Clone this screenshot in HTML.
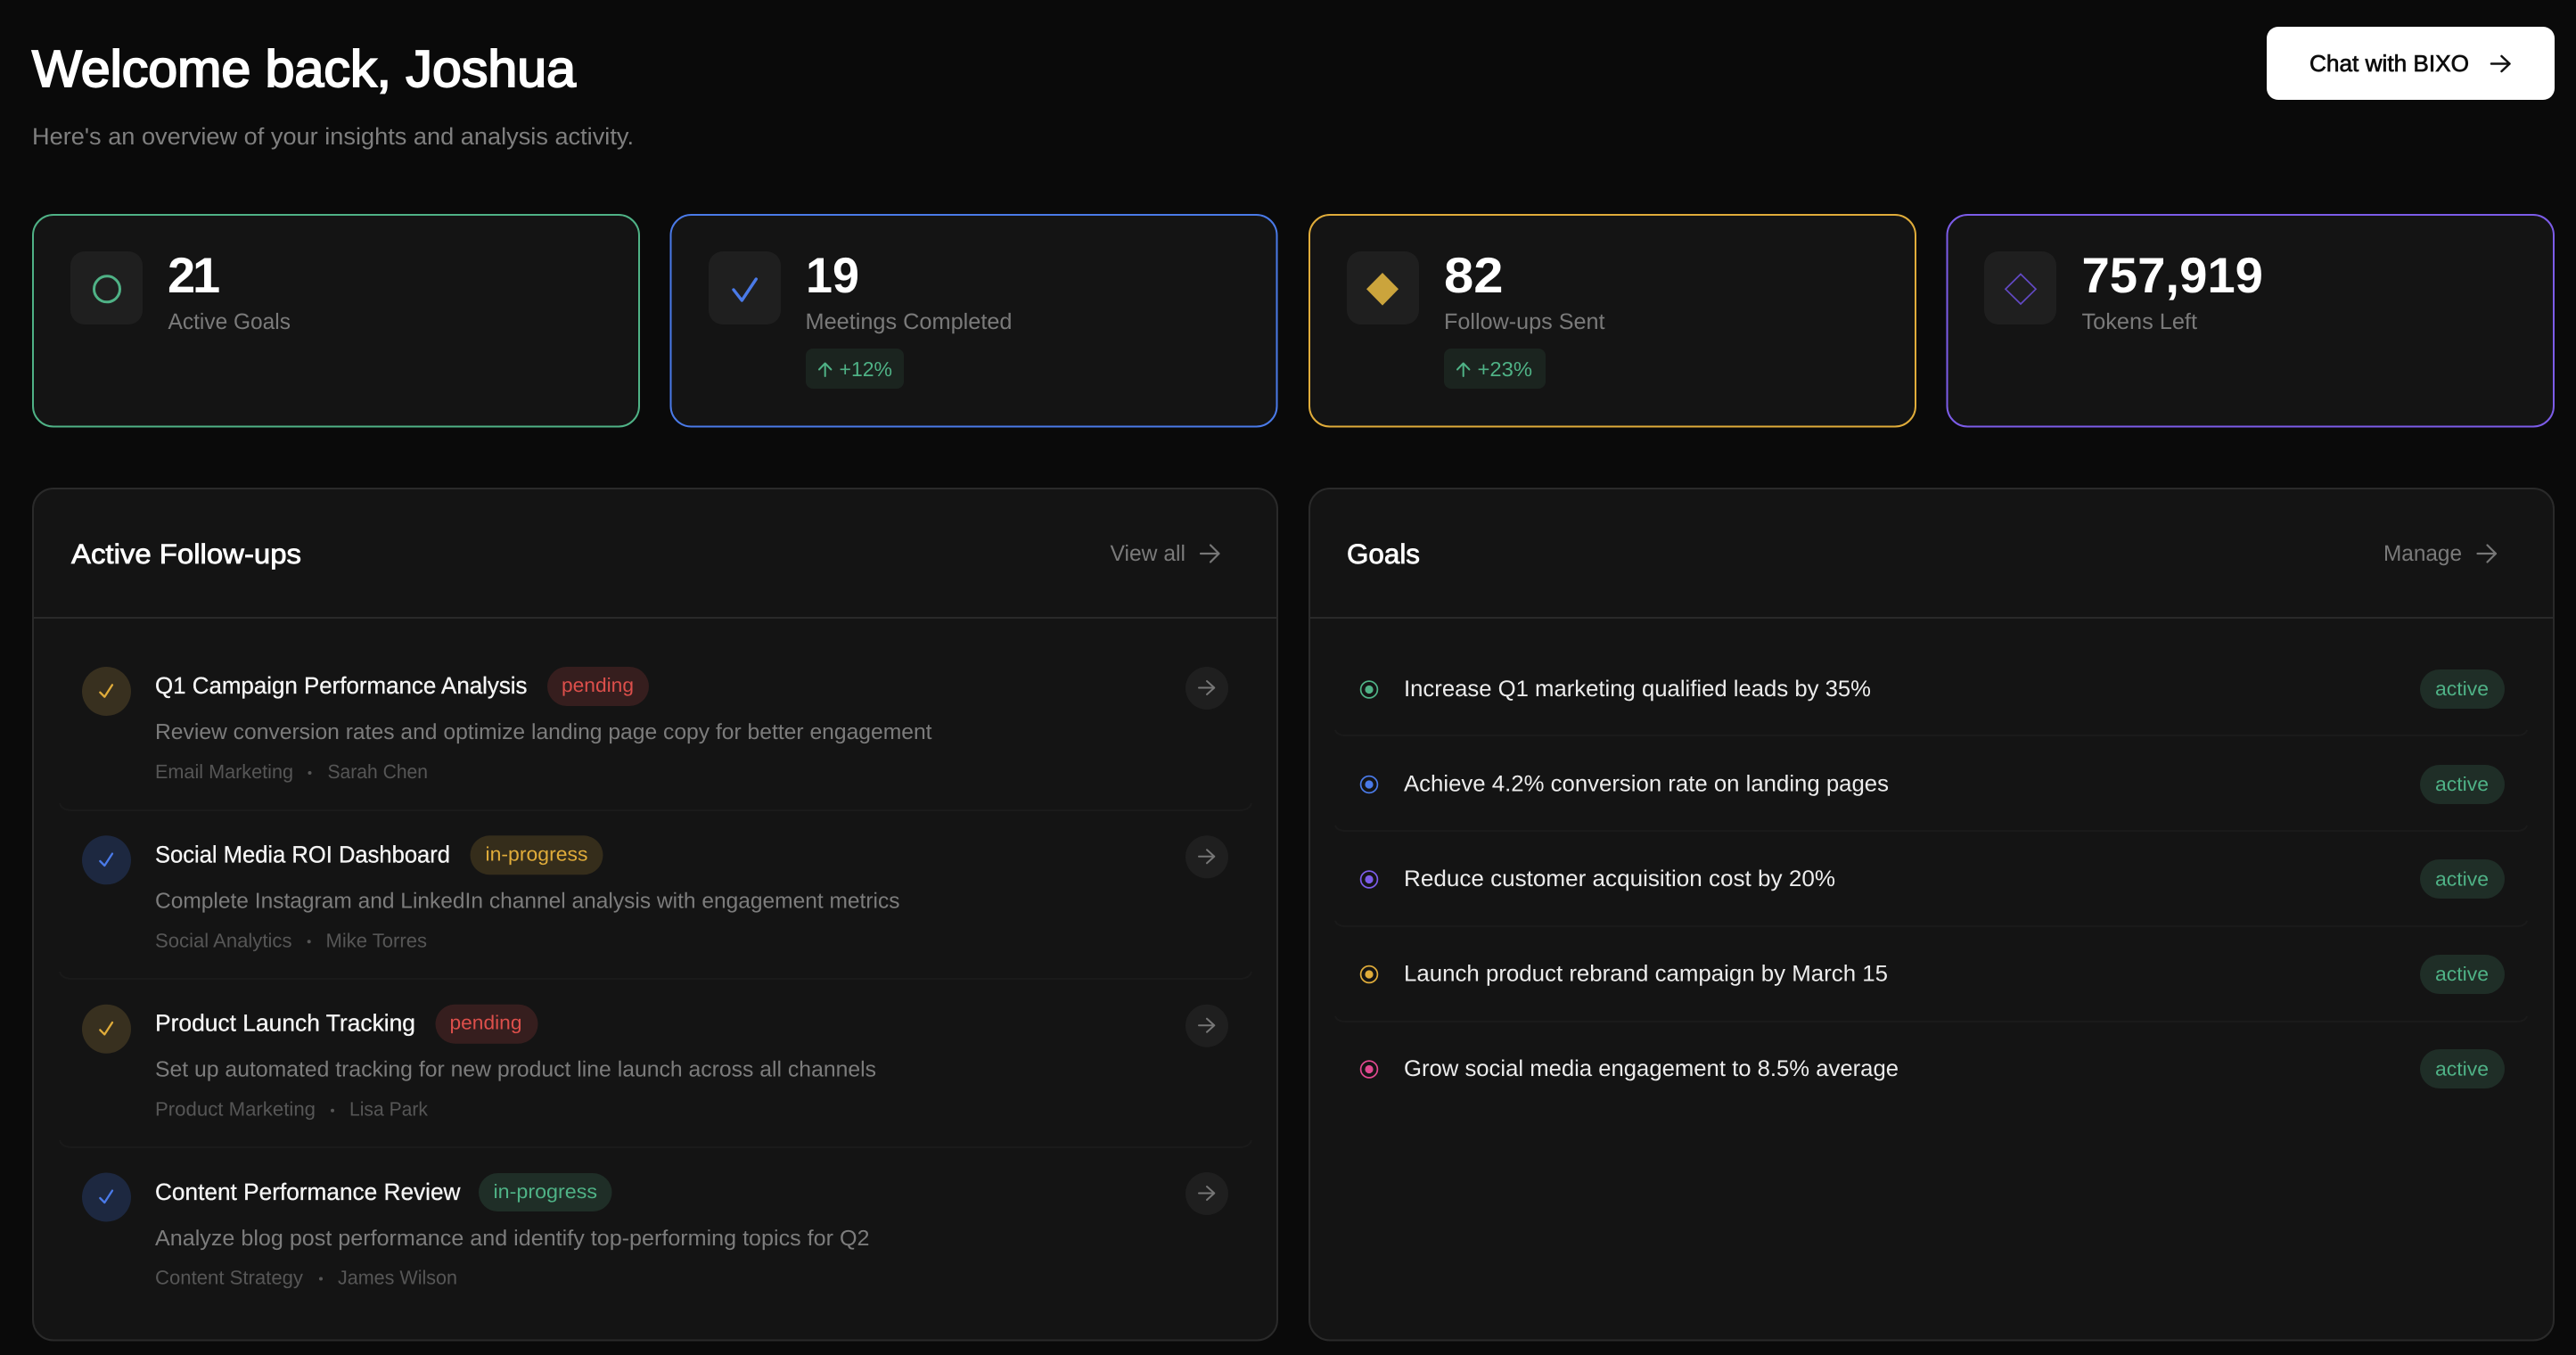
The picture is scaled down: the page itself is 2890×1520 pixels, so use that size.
<!DOCTYPE html>
<html lang="en">
<head>
<meta charset="utf-8">
<title>Dashboard</title>
<style>
html,body{margin:0;padding:0;width:2890px;height:1520px;overflow:hidden;background:#0a0a0a}
svg{display:block}
text{font-family:"Liberation Sans",Arial,sans-serif;text-rendering:geometricPrecision}
.h1{font-size:58px;fill:#fff;stroke:#fff;stroke-width:2px}
.sub{font-size:26.5px;fill:#7f7f7f}
.btn{font-size:26px;fill:#0d0d0d;stroke:#0d0d0d;stroke-width:.7px}
.num{font-size:56px;font-weight:700;fill:#fff}
.lab{font-size:25px;fill:#7a7a7a}
.delta{font-size:23px;fill:#4fb286}
.ph{font-size:31px;fill:#fff;stroke:#fff;stroke-width:.8px}
.link{font-size:25px;fill:#7a7a7a}
.t{font-size:26.5px;fill:#f5f5f5;stroke:#f5f5f5;stroke-width:.3px}
.d{font-size:24.5px;fill:#7c7c7c}
.m{font-size:22px;fill:#565656}
.bt{font-size:22px}
.g{font-size:25.5px;fill:#ececec}
.a{fill:none;stroke-linecap:round;stroke-linejoin:round}
.sep{fill:none;stroke:#1a1a1a;stroke-width:2}
</style>
</head>
<body>
<svg xmlns="http://www.w3.org/2000/svg" width="2890" height="1520" viewBox="0 0 2890 1520">
<rect width="2890" height="1520" fill="#0a0a0a"/>

<!-- Header -->
<text class="h1" x="36" y="97" textLength="610" lengthAdjust="spacingAndGlyphs">Welcome back, Joshua</text>
<text class="sub" x="36" y="162" textLength="675" lengthAdjust="spacingAndGlyphs">Here's an overview of your insights and analysis activity.</text>
<rect x="2543" y="30" width="323" height="82" rx="13" fill="#fff"/>
<text class="btn" x="2591" y="80" textLength="179" lengthAdjust="spacingAndGlyphs">Chat with BIXO</text>
<path class="a" d="M2795 71.5H2815.5M2806.5 63L2815.5 71.5L2806.5 80" stroke="#111" stroke-width="2.5"/>

<!-- Stat cards -->
<rect x="37" y="241" width="680" height="237.5" rx="23" fill="#141414" stroke="#4fb286" stroke-width="2"/>
<rect x="752.5" y="241" width="680" height="237.5" rx="23" fill="#141414" stroke="#4a7ae8" stroke-width="2"/>
<rect x="1469" y="241" width="680" height="237.5" rx="23" fill="#141414" stroke="#e0ac3a" stroke-width="2"/>
<rect x="2184.5" y="241" width="680.5" height="237.5" rx="23" fill="#141414" stroke="#7c5ce8" stroke-width="2"/>

<rect x="79" y="282" width="81" height="82" rx="16" fill="#1f1f1f"/>
<circle cx="120" cy="324.3" r="14.5" fill="none" stroke="#4fb286" stroke-width="3"/>
<text class="num" x="188 216" y="328">21</text>
<text class="lab" x="188.5" y="369" textLength="137.5" lengthAdjust="spacingAndGlyphs">Active Goals</text>

<rect x="795" y="282" width="81" height="82" rx="16" fill="#1f1f1f"/>
<path class="a" d="M823 325L832.3 337L848.3 313" stroke="#4a7ae8" stroke-width="3.4"/>
<text class="num" x="904" y="328" textLength="60" lengthAdjust="spacingAndGlyphs">19</text>
<text class="lab" x="903.5" y="369" textLength="232" lengthAdjust="spacingAndGlyphs">Meetings Completed</text>
<rect x="904" y="391" width="110" height="45" rx="8" fill="#1b241f"/>
<path class="a" d="M925.7 422V408M919 414.5L925.7 407.5L932.4 414.5" stroke="#4fb286" stroke-width="2"/>
<text class="delta" x="941.5" y="422" textLength="59.5" lengthAdjust="spacingAndGlyphs">+12%</text>

<rect x="1511" y="282" width="81" height="82" rx="16" fill="#1f1f1f"/>
<path d="M1551 306L1569 324.3L1551 342.6L1533 324.3Z" fill="#cba43c"/>
<text class="num" x="1620" y="328" textLength="66.5" lengthAdjust="spacingAndGlyphs">82</text>
<text class="lab" x="1620" y="369" textLength="180.5" lengthAdjust="spacingAndGlyphs">Follow-ups Sent</text>
<rect x="1620" y="391" width="114" height="45" rx="8" fill="#1b241f"/>
<path class="a" d="M1641.7 422V408M1635 414.5L1641.7 407.5L1648.4 414.5" stroke="#4fb286" stroke-width="2"/>
<text class="delta" x="1657.5" y="422" textLength="61.5" lengthAdjust="spacingAndGlyphs">+23%</text>

<rect x="2226" y="282" width="81" height="82" rx="16" fill="#1f1f1f"/>
<path d="M2267 307.5L2284 324.3L2267 341L2250 324.3Z" fill="none" stroke="#6249c4" stroke-width="1.7"/>
<text class="num" x="2335.5" y="328" textLength="203.5" lengthAdjust="spacingAndGlyphs">757,919</text>
<text class="lab" x="2335.5" y="369" textLength="129.5" lengthAdjust="spacingAndGlyphs">Tokens Left</text>

<!-- Left panel -->
<rect x="37" y="548" width="1396" height="955.5" rx="23" fill="#141414" stroke="#2a2a2a" stroke-width="2"/>
<rect x="38" y="692" width="1394" height="2" fill="#2a2a2a"/>
<text class="ph" x="80" y="632" textLength="258" lengthAdjust="spacingAndGlyphs">Active Follow-ups</text>
<text class="link" x="1245.5" y="629" textLength="84.5" lengthAdjust="spacingAndGlyphs">View all</text>
<path class="a" d="M1347 621H1367.5M1358 611.5L1367.5 621L1358 630.5" stroke="#777" stroke-width="2.2"/>

<!-- separators -->
<path class="sep" d="M67 901Q69 909 81 909H1390Q1402 909 1404 901"/>
<path class="sep" d="M67 1090Q69 1098 81 1098H1390Q1402 1098 1404 1090"/>
<path class="sep" d="M67 1279Q69 1287 81 1287H1390Q1402 1287 1404 1279"/>

<!-- Row 1 -->
<circle cx="119.5" cy="775.5" r="27.5" fill="#38301f"/>
<path class="a" d="M112.3 776.7L117.3 781.7L126 768.3" stroke="#e0ac3a" stroke-width="2.3"/>
<text class="t" x="174" y="778" textLength="417.5" lengthAdjust="spacingAndGlyphs">Q1 Campaign Performance Analysis</text>
<rect x="614" y="748" width="114" height="44" rx="22" fill="#361e1e"/>
<text class="bt" x="630" y="776" textLength="81" lengthAdjust="spacingAndGlyphs" fill="#dc4f4b">pending</text>
<text class="d" x="174" y="829" textLength="871.5" lengthAdjust="spacingAndGlyphs">Review conversion rates and optimize landing page copy for better engagement</text>
<text class="m" x="174" y="873" textLength="155" lengthAdjust="spacingAndGlyphs">Email Marketing</text>
<circle cx="347.5" cy="867" r="2" fill="#565656"/>
<text class="m" x="367.5" y="873" textLength="112.5" lengthAdjust="spacingAndGlyphs">Sarah Chen</text>
<circle cx="1354" cy="772" r="24" fill="#1f1f1f"/>
<path class="a" d="M1345 771.5H1362.3M1354 764L1362.3 771.5L1354 779" stroke="#777" stroke-width="2"/>

<!-- Row 2 -->
<circle cx="119.5" cy="964.8" r="27.5" fill="#1d2840"/>
<path class="a" d="M112.3 966L117.3 971L126 957.6" stroke="#4a7ae8" stroke-width="2.3"/>
<text class="t" x="174" y="967.3" textLength="331" lengthAdjust="spacingAndGlyphs">Social Media ROI Dashboard</text>
<rect x="527.5" y="937.3" width="149" height="44" rx="22" fill="#352d1b"/>
<text class="bt" x="544.5" y="965.3" textLength="115" lengthAdjust="spacingAndGlyphs" fill="#e0ac3a">in-progress</text>
<text class="d" x="174" y="1018.3" textLength="835.5" lengthAdjust="spacingAndGlyphs">Complete Instagram and LinkedIn channel analysis with engagement metrics</text>
<text class="m" x="174" y="1062.3" textLength="153.5" lengthAdjust="spacingAndGlyphs">Social Analytics</text>
<circle cx="346.7" cy="1056.3" r="2" fill="#565656"/>
<text class="m" x="365.5" y="1062.3" textLength="113.5" lengthAdjust="spacingAndGlyphs">Mike Torres</text>
<circle cx="1354" cy="961.3" r="24" fill="#1f1f1f"/>
<path class="a" d="M1345 960.8H1362.3M1354 953.3L1362.3 960.8L1354 968.3" stroke="#777" stroke-width="2"/>

<!-- Row 3 -->
<circle cx="119.5" cy="1154.2" r="27.5" fill="#38301f"/>
<path class="a" d="M112.3 1155.4L117.3 1160.4L126 1147" stroke="#e0ac3a" stroke-width="2.3"/>
<text class="t" x="174" y="1156.7" textLength="292" lengthAdjust="spacingAndGlyphs">Product Launch Tracking</text>
<rect x="488.5" y="1126.7" width="115" height="44" rx="22" fill="#361e1e"/>
<text class="bt" x="504.5" y="1154.7" textLength="81" lengthAdjust="spacingAndGlyphs" fill="#dc4f4b">pending</text>
<text class="d" x="174" y="1207.7" textLength="809" lengthAdjust="spacingAndGlyphs">Set up automated tracking for new product line launch across all channels</text>
<text class="m" x="174" y="1251.5" textLength="180" lengthAdjust="spacingAndGlyphs">Product Marketing</text>
<circle cx="373" cy="1245.7" r="2" fill="#565656"/>
<text class="m" x="392" y="1251.5" textLength="88" lengthAdjust="spacingAndGlyphs">Lisa Park</text>
<circle cx="1354" cy="1150.7" r="24" fill="#1f1f1f"/>
<path class="a" d="M1345 1150.2H1362.3M1354 1142.7L1362.3 1150.2L1354 1157.7" stroke="#777" stroke-width="2"/>

<!-- Row 4 -->
<circle cx="119.5" cy="1343" r="27.5" fill="#1d2840"/>
<path class="a" d="M112.3 1344L117.3 1349L126 1335.6" stroke="#4a7ae8" stroke-width="2.3"/>
<text class="t" x="174" y="1346" textLength="342.5" lengthAdjust="spacingAndGlyphs">Content Performance Review</text>
<rect x="537" y="1316" width="149.5" height="43" rx="21.5" fill="#1f2e27"/>
<text class="bt" x="553.5" y="1344" textLength="116.5" lengthAdjust="spacingAndGlyphs" fill="#4fb286">in-progress</text>
<text class="d" x="174" y="1397" textLength="801.5" lengthAdjust="spacingAndGlyphs">Analyze blog post performance and identify top-performing topics for Q2</text>
<text class="m" x="174" y="1440.5" textLength="166" lengthAdjust="spacingAndGlyphs">Content Strategy</text>
<circle cx="360" cy="1434.5" r="2" fill="#565656"/>
<text class="m" x="379" y="1440.5" textLength="134" lengthAdjust="spacingAndGlyphs">James Wilson</text>
<circle cx="1354" cy="1339" r="24" fill="#1f1f1f"/>
<path class="a" d="M1345 1338.5H1362.3M1354 1331L1362.3 1338.5L1354 1346" stroke="#777" stroke-width="2"/>

<!-- Right panel -->
<rect x="1469" y="548" width="1396" height="955.5" rx="23" fill="#141414" stroke="#2a2a2a" stroke-width="2"/>
<rect x="1470" y="692" width="1394" height="2" fill="#2a2a2a"/>
<text class="ph" x="1511" y="632" textLength="82" lengthAdjust="spacingAndGlyphs">Goals</text>
<text class="link" x="2674" y="629" textLength="88" lengthAdjust="spacingAndGlyphs">Manage</text>
<path class="a" d="M2779.5 621H2800M2790.5 611.5L2800 621L2790.5 630.5" stroke="#777" stroke-width="2.2"/>

<path class="sep" d="M1498 819Q1500 825 1510 825H2823Q2833 825 2835 819"/>
<path class="sep" d="M1498 926Q1500 932 1510 932H2823Q2833 932 2835 926"/>
<path class="sep" d="M1498 1033Q1500 1039 1510 1039H2823Q2833 1039 2835 1033"/>
<path class="sep" d="M1498 1140Q1500 1146 1510 1146H2823Q2833 1146 2835 1140"/>

<circle cx="1536" cy="773.5" r="9.4" fill="none" stroke="#4fb286" stroke-width="1.7"/><circle cx="1536" cy="773.5" r="4.6" fill="#4fb286"/>
<text class="g" x="1575" y="781" textLength="524" lengthAdjust="spacingAndGlyphs">Increase Q1 marketing qualified leads by 35%</text>
<rect x="2715" y="751" width="95" height="44" rx="22" fill="#1f2e27"/>
<text class="bt" x="2732" y="780" textLength="60" lengthAdjust="spacingAndGlyphs" fill="#4fb286">active</text>

<circle cx="1536" cy="880" r="9.4" fill="none" stroke="#4a7ae8" stroke-width="1.7"/><circle cx="1536" cy="880" r="4.6" fill="#4a7ae8"/>
<text class="g" x="1575" y="887.5" textLength="544" lengthAdjust="spacingAndGlyphs">Achieve 4.2% conversion rate on landing pages</text>
<rect x="2715" y="858" width="95" height="44" rx="22" fill="#1f2e27"/>
<text class="bt" x="2732" y="887" textLength="60" lengthAdjust="spacingAndGlyphs" fill="#4fb286">active</text>

<circle cx="1536" cy="986.5" r="9.4" fill="none" stroke="#7c5ce8" stroke-width="1.7"/><circle cx="1536" cy="986.5" r="4.6" fill="#7c5ce8"/>
<text class="g" x="1575" y="994" textLength="484" lengthAdjust="spacingAndGlyphs">Reduce customer acquisition cost by 20%</text>
<rect x="2715" y="964" width="95" height="44" rx="22" fill="#1f2e27"/>
<text class="bt" x="2732" y="993.5" textLength="60" lengthAdjust="spacingAndGlyphs" fill="#4fb286">active</text>

<circle cx="1536" cy="1093" r="9.4" fill="none" stroke="#e0ac3a" stroke-width="1.7"/><circle cx="1536" cy="1093" r="4.6" fill="#e0ac3a"/>
<text class="g" x="1575" y="1100.5" textLength="543" lengthAdjust="spacingAndGlyphs">Launch product rebrand campaign by March 15</text>
<rect x="2715" y="1071" width="95" height="44" rx="22" fill="#1f2e27"/>
<text class="bt" x="2732" y="1100" textLength="60" lengthAdjust="spacingAndGlyphs" fill="#4fb286">active</text>

<circle cx="1536" cy="1199.5" r="9.4" fill="none" stroke="#e0488f" stroke-width="1.7"/><circle cx="1536" cy="1199.5" r="4.6" fill="#e0488f"/>
<text class="g" x="1575" y="1207" textLength="555" lengthAdjust="spacingAndGlyphs">Grow social media engagement to 8.5% average</text>
<rect x="2715" y="1177" width="95" height="44" rx="22" fill="#1f2e27"/>
<text class="bt" x="2732" y="1206.5" textLength="60" lengthAdjust="spacingAndGlyphs" fill="#4fb286">active</text>
</svg>
</body>
</html>
